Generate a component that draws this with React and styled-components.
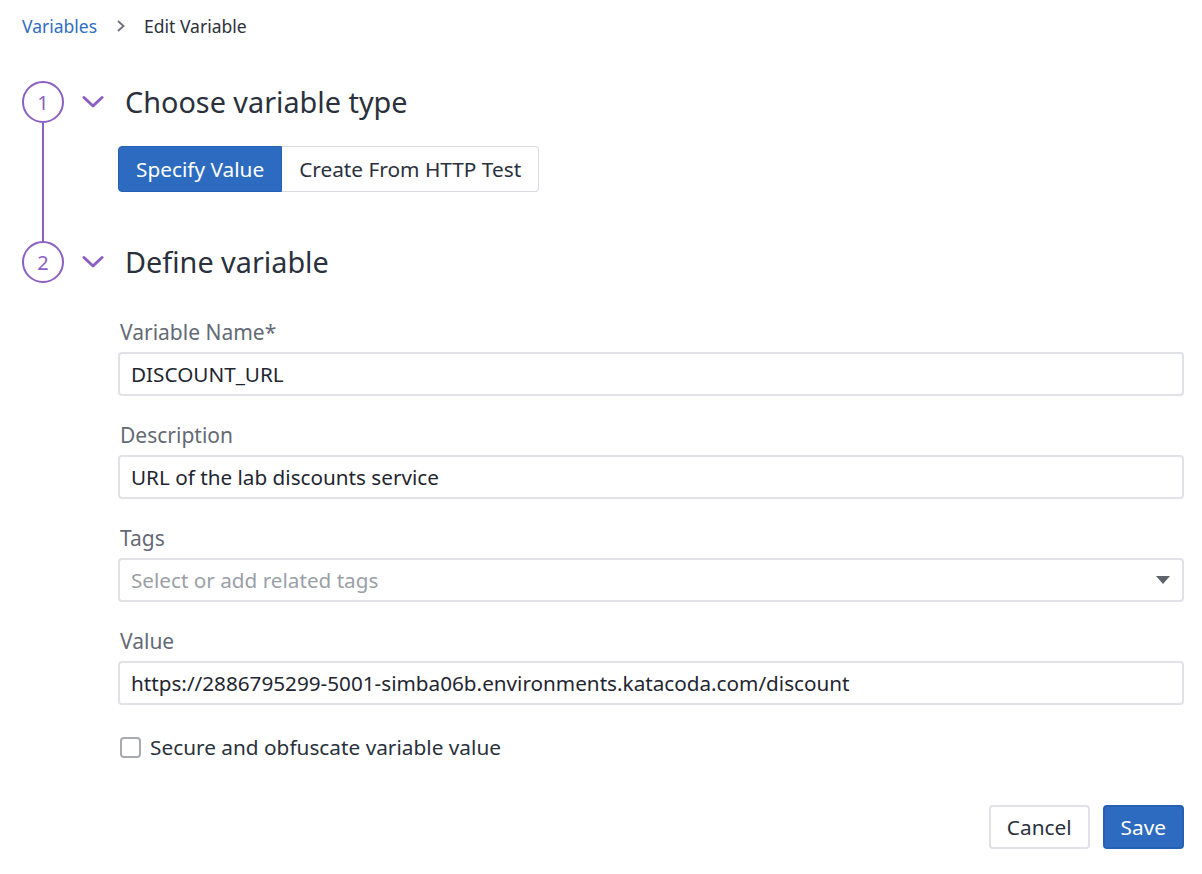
import React from "react";
import styled, { createGlobalStyle } from "styled-components";

const Global = createGlobalStyle`
  html, body { margin: 0; padding: 0; background: #ffffff; }
  body { font-family: "Noto Sans", "Open Sans", sans-serif; color: #2a313c; }
  * { box-sizing: border-box; }
`;

const Page = styled.div`
  padding: 14px 18px 0 22px;
  width: 1202px;
`;

const Breadcrumb = styled.nav`
  display: flex;
  align-items: center;
  height: 24px;
  font-size: 17.5px;
  line-height: 24px;
`;

const Crumb = styled.a`
  color: ${(p) => (p.$link ? "#2f6ec2" : "#2a313c")};
  text-decoration: none;
`;

const Sep = styled.span`
  display: flex;
  align-items: center;
  margin: 0 18px 0 19px;
  color: #6b7079;
`;

const Steps = styled.div`
  display: flex;
  flex-direction: column;
  margin-top: 43px;
`;

const Step = styled.section`
  display: flex;
`;

const Rail = styled.div`
  display: flex;
  flex-direction: column;
  align-items: center;
  width: 42px;
  flex: none;
`;

const Circle = styled.div`
  width: 42px;
  height: 42px;
  border-radius: 50%;
  border: 2px solid #8c5fc3;
  display: flex;
  align-items: center;
  justify-content: center;
  color: #8c5fc3;
  font-size: 20px;
  flex: none;
`;

const Line = styled.div`
  width: 2px;
  flex: 1;
  background: #8c5fc3;
`;

const StepMain = styled.div`
  flex: 1;
  margin-left: 18px;
  display: flex;
  flex-direction: column;
`;

const StepHeader = styled.div`
  display: flex;
  align-items: center;
  height: 42px;
  gap: 21px;
`;

const Title = styled.h2`
  margin: 0;
  font-size: 28.8px;
  font-weight: 400;
  color: #2a313c;
  line-height: 34px;
`;

const StepBody = styled.div`
  margin-left: 36px;
  padding-top: ${(p) => p.$top}px;
  padding-bottom: ${(p) => p.$bottom}px;
  display: flex;
  flex-direction: column;
`;

const Segmented = styled.div`
  display: flex;
`;

const SegButton = styled.button`
  height: 46px;
  padding: 0 17px;
  font-family: inherit;
  font-size: 20.8px;
  border: 1.5px solid ${(p) => (p.$active ? "#2560b3" : "#d8dae0")};
  background: ${(p) => (p.$active ? "#2c6bc0" : "#ffffff")};
  color: ${(p) => (p.$active ? "#ffffff" : "#2a313c")};
  border-radius: ${(p) => (p.$first ? "4px 0 0 4px" : "0 4px 4px 0")};
  ${(p) => (!p.$first ? "border-left: none;" : "")}
  cursor: pointer;
`;

const Fields = styled.div`
  display: flex;
  flex-direction: column;
  gap: 27px;
`;

const Field = styled.div`
  display: flex;
  flex-direction: column;
  gap: 8px;
`;

const Label = styled.label`
  font-size: 21px;
  line-height: 24px;
  color: #646a75;
  padding-left: 2px;
`;

const Input = styled.div`
  height: 44px;
  border: 2px solid #e0e2e7;
  border-radius: 4px;
  display: flex;
  align-items: center;
  justify-content: space-between;
  padding: 0 11px;
  font-size: 20.7px;
  white-space: nowrap;
  color: ${(p) => (p.$placeholder ? "#9a9fa8" : "#1f2631")};
  background: #fff;
`;

const Caret = styled.span`
  width: 0;
  height: 0;
  border-left: 7px solid transparent;
  border-right: 7px solid transparent;
  border-top: 8px solid #5f636b;
  margin-right: 1px;
`;

const CheckRow = styled.label`
  display: flex;
  align-items: center;
  gap: 9px;
  margin-top: 30px;
  font-size: 20.8px;
  line-height: 24px;
  color: #2a313c;
  padding-left: 2px;
`;

const Box = styled.span`
  width: 21px;
  height: 21px;
  border: 2px solid #a6aab1;
  border-radius: 4px;
  background: #fff;
`;

const Actions = styled.div`
  display: flex;
  justify-content: flex-end;
  gap: 13px;
  margin-top: 46px;
`;

const Button = styled.button`
  height: 44px;
  padding: 0 16px;
  font-family: inherit;
  font-size: 20.8px;
  border-radius: 4px;
  border: 2px solid ${(p) => (p.$primary ? "#2560b3" : "#e0e2e7")};
  background: ${(p) => (p.$primary ? "#2c6bc0" : "#fff")};
  color: ${(p) => (p.$primary ? "#fff" : "#2a313c")};
  cursor: pointer;
`;

const Chevron = () => (
  <svg width="22" height="14" viewBox="0 0 22 14" fill="none">
    <path d="M2 2.5 L11 11 L20 2.5" stroke="#8c5fc3" strokeWidth="3" strokeLinecap="round" strokeLinejoin="round" />
  </svg>
);

export default function App() {
  return (
    <>
      <Global />
      <Page>
        <Breadcrumb>
          <Crumb $link href="#">Variables</Crumb>
          <Sep>
            <svg width="10" height="14" viewBox="0 0 10 14" fill="none">
              <path d="M2 2 L7.5 7 L2 12" stroke="#6b7079" strokeWidth="1.8" />
            </svg>
          </Sep>
          <Crumb>Edit Variable</Crumb>
        </Breadcrumb>

        <Steps>
          <Step>
            <Rail>
              <Circle>1</Circle>
              <Line />
            </Rail>
            <StepMain>
              <StepHeader>
                <Chevron />
                <Title>Choose variable type</Title>
              </StepHeader>
              <StepBody $top={23} $bottom={49}>
                <Segmented>
                  <SegButton $active $first>Specify Value</SegButton>
                  <SegButton>Create From HTTP Test</SegButton>
                </Segmented>
              </StepBody>
            </StepMain>
          </Step>

          <Step>
            <Rail>
              <Circle>2</Circle>
            </Rail>
            <StepMain>
              <StepHeader>
                <Chevron />
                <Title>Define variable</Title>
              </StepHeader>
              <StepBody $top={37} $bottom={24}>
                <Fields>
                  <Field>
                    <Label>Variable Name*</Label>
                    <Input>DISCOUNT_URL</Input>
                  </Field>
                  <Field>
                    <Label>Description</Label>
                    <Input>URL of the lab discounts service</Input>
                  </Field>
                  <Field>
                    <Label>Tags</Label>
                    <Input $placeholder>
                      Select or add related tags
                      <Caret />
                    </Input>
                  </Field>
                  <Field>
                    <Label>Value</Label>
                    <Input>https://2886795299-5001-simba06b.environments.katacoda.com/discount</Input>
                  </Field>
                </Fields>
                <CheckRow>
                  <Box />
                  Secure and obfuscate variable value
                </CheckRow>
                <Actions>
                  <Button>Cancel</Button>
                  <Button $primary>Save</Button>
                </Actions>
              </StepBody>
            </StepMain>
          </Step>
        </Steps>
      </Page>
    </>
  );
}
